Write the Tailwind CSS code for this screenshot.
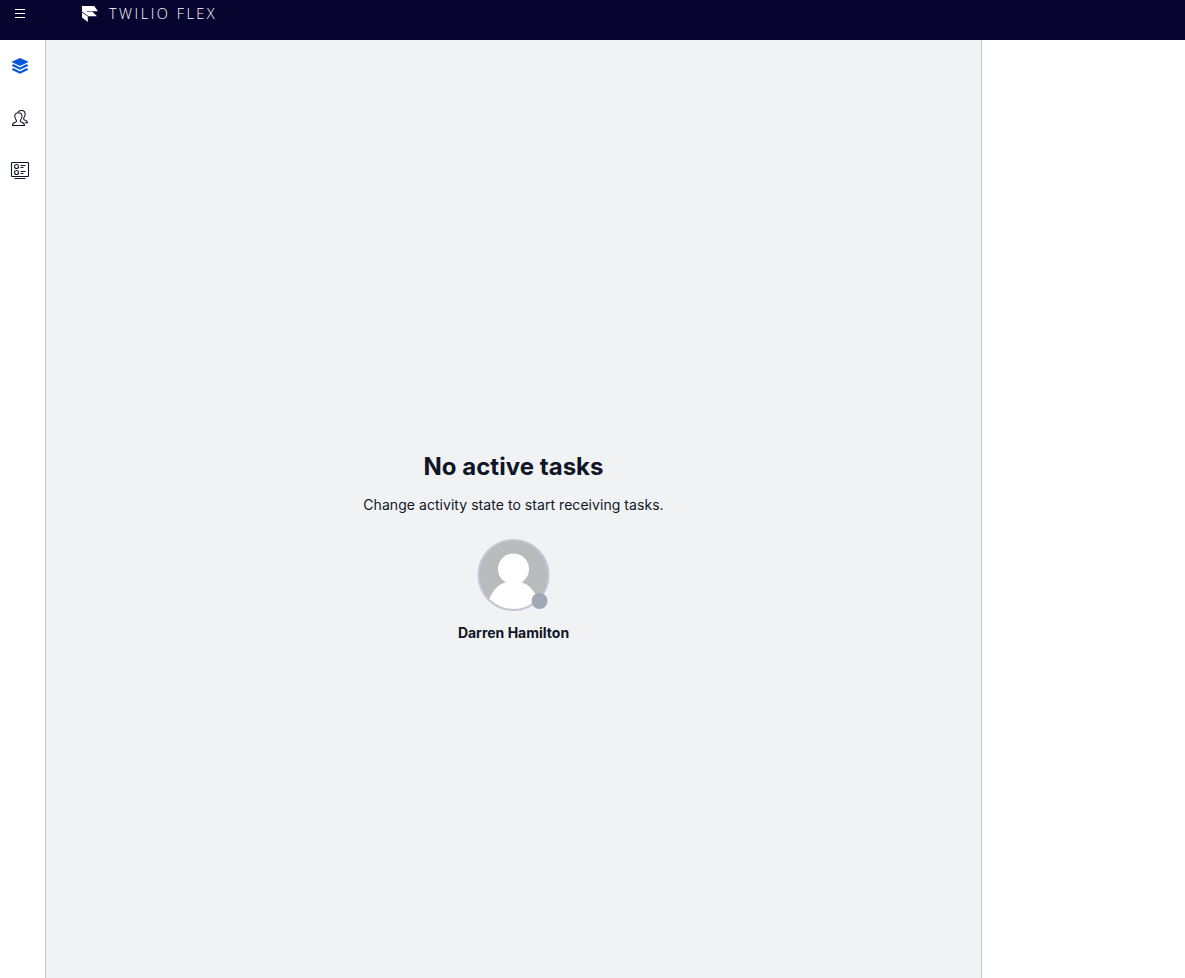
<!DOCTYPE html>
<html lang="en">
<head>
<meta charset="utf-8">
<title>Twilio Flex</title>
<script src="https://cdn.jsdelivr.net/npm/@tailwindcss/browser@4"></script>
</head>
<body class="flex h-screen flex-col overflow-hidden bg-white font-['Inter',sans-serif] text-[#101626]">
  <header class="flex h-10 shrink-0 items-start bg-[#070430] text-white">
    <button class="ml-[15px] mt-[9px]" aria-label="Menu">
      <svg class="block" width="10" height="9" viewBox="0 0 10 9" fill="currentColor"><path d="M0 0h10v1H0zM0 4h10v1H0zM0 8h10v1H0z"/></svg>
    </button>
    <svg class="ml-[57px] mt-1.5 block" width="16" height="16" viewBox="0 0 16 16" fill="currentColor"><path d="M0 0H12.2L16 5.2H5.6L5 5L0 .9Z"/><path d="M0 1.6L5 5.8H10.5L15 10.2H6.4L0 5.6Z"/><path d="M0 6.4L5.8 10.5V16L0 11.4Z"/><path d="M0 0H5V6L0 4Z"/></svg>
    <span class="ml-[11px] mt-1 whitespace-nowrap font-['Open_Sans',sans-serif] text-[14.5px] font-light leading-5 tracking-[2.5px]">TWILIO FLEX</span>
  </header>
  <div class="flex min-h-0 flex-1">
    <nav class="flex w-[46px] shrink-0 flex-col items-center gap-8 border-r border-[#c4c8d2] pr-[5px] pt-4">
      <svg class="size-5 text-[#0657db]" viewBox="0 0 20 20" fill="currentColor"><path d="M10 2L18 5.5V6.3L10 9.9L2 6.3V5.5Z"/><path d="M2 9L3.8 8.3L10 11.5L16.2 8.3L18 9V9.9L10 13.8L2 9.9Z"/><path d="M2 13L3.8 12.3L10 15.5L16.2 12.3L18 13V13.9L10 17.8L2 13.9Z"/></svg>
      <svg class="size-5" viewBox="0 0 20 20" fill="none" stroke="currentColor" stroke-width="1.05" stroke-linejoin="round" stroke-linecap="round"><path d="M2.5 17.4C2.5 15.2 3.4 14.7 5.6 14C6.6 13.6 6.8 12.8 6.1 11.9C5.1 10.8 4.8 9.6 4.8 8C4.8 5.8 6.2 4.7 8.4 4.7S12 5.8 12 8C12 9.6 11.7 10.8 10.7 11.9C10 12.8 10.2 13.6 11.2 14C13.4 14.7 14.5 15.2 14.5 17.4Z"/><path d="M8.4 3.6C9.2 2.8 10.4 2.5 11.5 2.5C13.9 2.5 15.1 4 15.1 6C15.1 7.7 14.8 8.7 14 9.7C13.3 10.6 13.5 11.5 14.4 11.9C16.4 12.6 17.5 12.8 17.5 14.7H15.2"/></svg>
      <svg class="size-5" viewBox="0 0 20 20" fill="none" stroke="currentColor" stroke-width="1.1"><rect x="1.5" y="2.5" width="17" height="14" rx=".8"/><circle cx="6.5" cy="6.5" r="2"/><circle cx="6.5" cy="12.5" r="2"/><path d="M10.5 5.5H15.5M10.5 7.5H13.5M10.5 11.5H15.5M10.5 13.5H13.5M4.5 18.5H15.5"/></svg>
    </nav>
    <main class="flex w-[936px] shrink-0 flex-col items-center border-r border-[#c4c8d2] bg-[#f0f2f4] pt-[411px]">
      <h1 class="whitespace-nowrap text-2xl font-bold leading-8 tracking-[0.03px]">No active tasks</h1>
      <p class="mt-3 whitespace-nowrap text-sm leading-5 tracking-[0.05px]">Change activity state to start receiving tasks.</p>
      <div class="relative mr-px mt-6 size-[72px]">
        <svg class="block size-full overflow-visible" viewBox="-0.5 0 72 72">
          <defs><clipPath id="avatar"><circle cx="36" cy="36" r="34"/></clipPath></defs>
          <circle cx="36" cy="36" r="35" fill="#babbbc" stroke="#c4c5d6" stroke-width="2"/>
          <g fill="white" clip-path="url(#avatar)"><circle cx="36" cy="30" r="15.5"/><path d="M11 62C15 51 21 45 29 43H43C51 45 57 51 61 62V72H11Z"/></g>
          <circle cx="62" cy="62" r="8" fill="#a2a7b8"/>
        </svg>
      </div>
      <p class="mt-3 whitespace-nowrap text-sm font-bold leading-5">Darren Hamilton</p>
    </main>
    <aside class="flex-1 bg-white"></aside>
  </div>
</body>
</html>
